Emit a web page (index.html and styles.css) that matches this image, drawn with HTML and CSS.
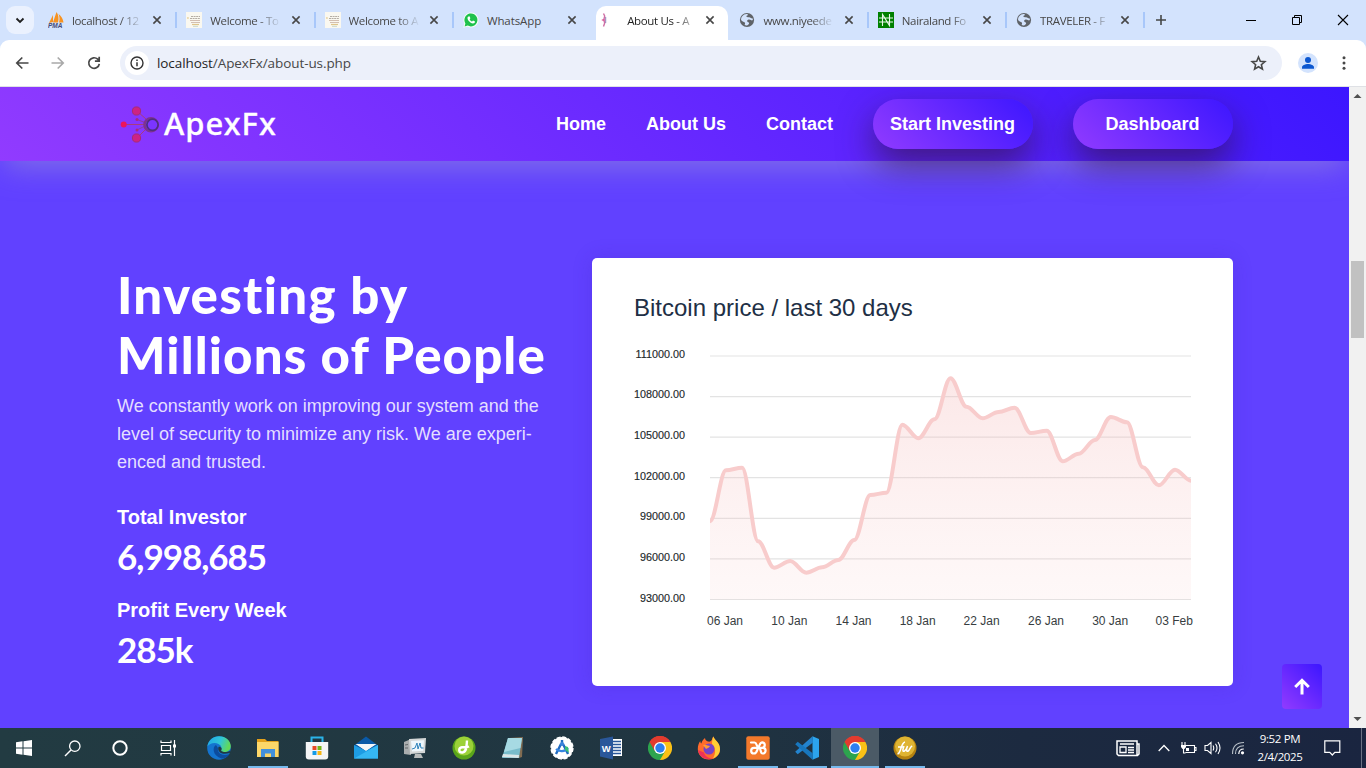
FILE: index.html
```html
<!DOCTYPE html>
<html lang="en">
<head>
<meta charset="utf-8">
<title>About Us - ApexFx</title>
<link rel="stylesheet" href="styles.css">
</head>
<body>
<svg class="defs" width="0" height="0">
  <defs>
    <symbol id="close" viewBox="0 0 10 10"><path d="M1.400 1.400l7.200 7.200M8.600 1.400L1.400 8.600" fill="none" stroke="currentColor" stroke-width="1.600"/></symbol>
    <symbol id="globe" viewBox="0 0 16 16"><circle cx="8" cy="8" r="7.100" fill="#5f6368"/><path d="M3 4.600c1.300-2 3-2.700 4.500-2.700 1 0 1.600.3 1.300 1.100-.3.700-1.200.5-1.400 1.200-.2.800 1.200.9 2.600 1 1.800.1 2 1.200 3.300 1.200.6 0 .8.500.5 1.400-.3 1-1.300.8-1.900.3-.9-.7-1.900-.8-2.900-.3-1 .6-1.200 1.500-.3 2.100.8.500 1.500.4 1.400 1.400-.1 1-1 1.700-2 2.200-.9.100-2-.1-2.500-.4.400-.9.700-1.700.2-2.500C5 9.400 2.500 9.300 2.100 7.900 2 6.800 2.400 5.500 3 4.600z" fill="#d3e3fd"/></symbol>
    <symbol id="page-icon" viewBox="0 0 16 16"><rect width="16" height="16" fill="#faf8f0"/><path d="M1.500 5l1.500 1-1.500 1z" fill="#d8b260"/><path d="M5 4.500h9M4 6.500h10" stroke="#aaa49b" stroke-width=".9" stroke-dasharray="2 .6"/><path d="M4 8.500h10M5 10.500h9" stroke="#ceb8aa" stroke-width=".9"/><path d="M6 12.500h7" stroke="#dfc58c" stroke-width="1.200"/><path d="M7 14.300h5" stroke="#c9d8ca"/></symbol>
    <symbol id="chrome" viewBox="0 0 24 24"><path d="M12 12L1.600 6A12 12 0 0 1 22.400 6z" fill="#ea4335"/><path d="M12 12L22.400 6A12 12 0 0 1 12 24z" fill="#fbc116"/><path d="M12 12L12 24A12 12 0 0 1 1.600 6z" fill="#2da44e"/><path d="M12 6h10.400L17.200 15z" fill="#fbc116"/><path d="M6.800 15L1.600 6A12 12 0 0 1 22.400 6H12z" fill="#e33b2e"/><path d="M17.200 15L12 24 6.800 15z" fill="#2da44e"/><circle cx="12" cy="12" r="6" fill="#fff"/><circle cx="12" cy="12" r="4.700" fill="#2d7ff0"/></symbol>
  </defs>
</svg>

<div class="tabstrip">
  <div class="tab-search"><svg width="10" height="7" viewBox="0 0 10 7"><path d="M1.500 1.500L5 5l3.500-3.500" fill="none" stroke="#1f1f1f" stroke-width="1.800"/></svg></div>
  <div class="tabs">
    <div class="tab"><svg class="fav" viewBox="0 0 16 16"><path d="M1 11L5 3v7zM5 10.500L8.500 0c2 3 2.500 6 1.500 10.500zM11 10.500c1-3 .5-6-.5-8.500 3 2 4.500 5 5 8.500z" fill="#f79321"/><text x="0" y="15.500" class="pma">PMA</text></svg><span class="tab-title">localhost / 12</span><svg class="x"><use href="#close"/></svg></div>
    <div class="tab"><svg class="fav"><use href="#page-icon"/></svg><span class="tab-title">Welcome - To</span><svg class="x"><use href="#close"/></svg></div>
    <div class="tab"><svg class="fav"><use href="#page-icon"/></svg><span class="tab-title">Welcome to A</span><svg class="x"><use href="#close"/></svg></div>
    <div class="tab no-line"><svg class="fav" viewBox="0 0 16 16"><path d="M.3 15.700L1.400 11.600A7.500 7.500 0 1 1 4.400 14.600z" fill="#f5fff7"/><path d="M1.600 14.400L2.400 11.400A6.500 6.500 0 1 1 4.700 13.600z" fill="#1fc14c"/><path d="M5.500 4.500l1-.2.900 2-.8 1c.6 1.100 1.300 1.800 2.500 2.300l.9-1 2 .9c.1 1.200-.9 2-2 2C7.500 11.300 4.600 8.500 4.500 6c0-.7.500-1.300 1-1.500z" fill="#fff"/></svg><span class="tab-title whole">WhatsApp</span><svg class="x"><use href="#close"/></svg></div>
    <div class="tab active no-line"><svg class="fav" viewBox="0 0 16 16"><path d="M2.500 1.500l1.200 2.500-.9 4 .9 3-1.200 3.500" fill="none" stroke="#cf6fa5" stroke-width="1.400"/><path d="M.8 8h3" stroke="#d94f91" stroke-width="1.200"/><path d="M4.700 5v6" stroke="#927fb8" stroke-width="1"/></svg><span class="tab-title">About Us - A</span><svg class="x"><use href="#close"/></svg></div>
    <div class="tab"><svg class="fav"><use href="#globe"/></svg><span class="tab-title">www.niyeede</span><svg class="x"><use href="#close"/></svg></div>
    <div class="tab"><svg class="fav" viewBox="0 0 16 16"><rect width="16" height="16" fill="#008000"/><path d="M4.500 14V2.500L11.500 13.500V2M1 6h14M1 10h14" fill="none" stroke="#e9f7e9" stroke-width="1.100"/></svg><span class="tab-title">Nairaland Fo</span><svg class="x"><use href="#close"/></svg></div>
    <div class="tab"><svg class="fav"><use href="#globe"/></svg><span class="tab-title">TRAVELER - F</span><svg class="x"><use href="#close"/></svg></div>
  </div>
  <svg class="plus" width="12" height="12"><path d="M6 1v10M1 6h10" stroke="#454746" stroke-width="1.600"/></svg>
  <div class="winctl">
    <svg width="12" height="12"><path d="M1 6.500h10" stroke="#000"/></svg>
    <svg width="12" height="12"><path d="M1.500 3.500h7v7h-7zM3.500 3.500v-2h7v7h-2" fill="none" stroke="#000"/></svg>
    <svg width="12" height="12"><path d="M1 1l10 10M11 1L1 11" stroke="#000" stroke-width="1.100"/></svg>
  </div>
</div>

<div class="toolbar">
  <svg class="tool" viewBox="0 0 14 14"><path d="M13.500 7H2M7.300 1.500L1.800 7l5.500 5.500" fill="none" stroke="#474747" stroke-width="1.700"/></svg>
  <svg class="tool" viewBox="0 0 14 14"><path d="M.5 7H12M6.700 1.500L12.200 7l-5.500 5.500" fill="none" stroke="#a9a9a9" stroke-width="1.700"/></svg>
  <svg class="tool" viewBox="0 0 14 14"><path d="M12.300 7.800A5.300 5.300 0 1 1 10.700 3.200L12 4.500M12.200.8v4.300H7.900" fill="none" stroke="#474747" stroke-width="1.700"/></svg>
  <div class="omnibox">
    <span class="info"><svg width="14" height="14" viewBox="0 0 14 14"><circle cx="7" cy="7" r="6" fill="none" stroke="#333" stroke-width="1.400"/><path d="M7 6.300v4M7 3.500v1.500" stroke="#333" stroke-width="1.500"/></svg></span>
    <span class="url"><b>localhost</b>/ApexFx/about-us.php</span>
    <svg class="star" viewBox="0 0 16 16"><path d="M8 1.900l1.700 4 4.300.4-3.300 2.800 1 4.200L8 11.100l-3.700 2.200 1-4.200L2 6.300l4.300-.4z" fill="none" stroke="#474747" stroke-width="1.500"/></svg>
  </div>
  <svg class="avatar" viewBox="0 0 20 20"><circle cx="10" cy="10" r="10" fill="#d3e3fd"/><circle cx="10" cy="7" r="3" fill="#0b57d0"/><path d="M4 15.700v-1.500C4 12.300 7.500 11 10 11s6 1.300 6 3.200v1.500z" fill="#0b57d0"/></svg>
  <svg class="dots" viewBox="0 0 4 14"><circle cx="2" cy="1.700" r="1.500"/><circle cx="2" cy="7" r="1.500"/><circle cx="2" cy="12.300" r="1.500"/></svg>
</div>

<div class="viewport">
  <div class="page">
    <header class="header">
      <div class="brand">
        <svg width="40" height="38" viewBox="0 0 40 38"><g fill="none" stroke="#a93b7d" stroke-width="1"><path d="M17 5l10 9M4 18.500h20M17 32l9-9"/><path d="M17 13.500l8 3M17 24l8-4" stroke="#8f3aa0"/></g><circle cx="16.500" cy="5" r="4.100" fill="#ce2384" stroke="#a92d70"/><circle cx="16.500" cy="32" r="4.100" fill="#ce2384" stroke="#a92d70"/><circle cx="3.700" cy="18.500" r="3" fill="#ed145b"/><circle cx="17" cy="13.500" r="1.500" fill="#a82a80"/><circle cx="17" cy="24" r="1.500" fill="#a82a80"/><circle cx="31" cy="18.800" r="6.500" fill="#7b35ff" stroke="#7d338f" stroke-width="2.600"/><circle cx="32.500" cy="18.800" r="5.600" fill="#7b35ff" stroke="#4f2d80" stroke-width="1.700"/></svg>
        <span class="brand-name">ApexFx</span>
      </div>
      <nav class="nav">
        <a>Home</a><a>About Us</a><a>Contact</a>
        <a class="pill">Start Investing</a><a class="pill">Dashboard</a>
      </nav>
    </header>
    <main class="content">
      <section class="intro">
        <h1><span class="h-a">Investing by</span><br><span class="h-b">Millions of People</span></h1>
        <p>We constantly work on improving our system and the<br>level of security to minimize any risk. We are experi-<br>enced and trusted.</p>
        <h4>Total Investor</h4>
        <div class="num">6,998,685</div>
        <h4>Profit Every Week</h4>
        <div class="num">285k</div>
      </section>
      <section class="card">
        <h2>Bitcoin price / last 30 days</h2>
        <svg class="chart" width="641" height="300" viewBox="592 340 641 300">
          <defs><linearGradient id="fade" gradientUnits="userSpaceOnUse" x1="0" y1="378" x2="0" y2="599"><stop offset="0" stop-color="#f3b3b3" stop-opacity=".31"/><stop offset="1" stop-color="#f9caca" stop-opacity=".13"/></linearGradient></defs>
          <g class="grid"><path d="M710 356h481M710 396.600h481M710 437.200h481M710 477.700h481M710 518.300h481M710 558.900h481M710 599.500h481"/></g>
          <path class="area" d="M710 521.300C715.600 521.300 720.400 470.300 726 470.300S736.500 467.700 742.100 467.700 752.500 541.300 758.100 541.300 768.500 567.700 774.100 567.700 784.600 561 790.200 561 800.600 572.700 806.200 572.700 816.600 567.300 822.200 567.300 832.700 560 838.300 560 848.700 540 854.300 540 864.700 495 870.300 495 880.800 492.700 886.400 492.700 896.800 424.700 902.400 424.700 912.800 438.300 918.400 438.300 928.900 419.300 934.500 419.300 944.900 378.200 950.500 378.200 960.900 406.700 966.500 406.700 977 418.300 982.600 418.300 993 412 998.600 412 1009 407.700 1014.600 407.700 1025.100 433 1030.700 433 1041.100 430.700 1046.700 430.700 1057.100 461.300 1062.700 461.300 1073.200 453.700 1078.800 453.700 1089.200 440 1094.800 440 1105.200 417 1110.800 417 1121.300 422.300 1126.900 422.300 1137.300 467.300 1142.900 467.300 1153.300 485.300 1158.900 485.300 1169.400 469.700 1175 469.700 1185.400 480.700 1191 480.700V599.500H710z"/>
          <path class="line" d="M710 521.300C715.600 521.300 720.400 470.300 726 470.300S736.500 467.700 742.100 467.700 752.500 541.300 758.100 541.300 768.500 567.700 774.100 567.700 784.600 561 790.200 561 800.600 572.700 806.200 572.700 816.600 567.300 822.200 567.300 832.700 560 838.300 560 848.700 540 854.300 540 864.700 495 870.300 495 880.800 492.700 886.400 492.700 896.800 424.700 902.400 424.700 912.800 438.300 918.400 438.300 928.900 419.300 934.500 419.300 944.900 378.200 950.500 378.200 960.900 406.700 966.500 406.700 977 418.300 982.600 418.300 993 412 998.600 412 1009 407.700 1014.600 407.700 1025.100 433 1030.700 433 1041.100 430.700 1046.700 430.700 1057.100 461.300 1062.700 461.300 1073.200 453.700 1078.800 453.700 1089.200 440 1094.800 440 1105.200 417 1110.800 417 1121.300 422.300 1126.900 422.300 1137.300 467.300 1142.900 467.300 1153.300 485.300 1158.900 485.300 1169.400 469.700 1175 469.700 1185.400 480.700 1191 480.700"/>
          <g class="ylab"><text x="685" y="358">111000.00</text><text x="685" y="398">108000.00</text><text x="685" y="439">105000.00</text><text x="685" y="480">102000.00</text><text x="685" y="520">99000.00</text><text x="685" y="561">96000.00</text><text x="685" y="602">93000.00</text></g>
          <g class="xlab"><text x="725" y="625">06 Jan</text><text x="789.300" y="625">10 Jan</text><text x="853.500" y="625">14 Jan</text><text x="917.700" y="625">18 Jan</text><text x="981.600" y="625">22 Jan</text><text x="1046" y="625">26 Jan</text><text x="1110.200" y="625">30 Jan</text><text x="1174.300" y="625">03 Feb</text></g>
        </svg>
      </section>
    </main>
    <a class="to-top"><svg width="18" height="18" viewBox="0 0 18 18"><path d="M9 16.500V3M2.200 9L9 2.300 15.800 9" fill="none" stroke="#fff" stroke-width="3"/></svg></a>
  </div>
  <div class="scrollbar">
    <svg width="17" height="17"><path d="M4.500 11l4-4 4 4z" fill="#505050"/></svg>
    <div class="thumb"></div>
    <svg class="down" width="17" height="17"><path d="M4.500 6l4 4 4-4z" fill="#505050"/></svg>
  </div>
</div>

<div class="taskbar">
  <div class="sys"><svg width="16" height="16"><path d="M0 2.300L6.500 1.300V7.500H0zM7.500 1.200L16 0v7.500H7.500zM0 8.500h6.500v6.200L0 13.800zM7.500 8.500H16V16l-8.500-1.200z" fill="#fff"/></svg></div>
  <div class="sys"><svg width="17" height="17"><circle cx="10.800" cy="6.200" r="5.200" fill="none" stroke="#fff" stroke-width="1.300"/><path d="M7 10L1 16" stroke="#fff" stroke-width="1.400"/></svg></div>
  <div class="sys"><svg width="16" height="16"><circle cx="8" cy="8" r="6.700" fill="none" stroke="#fff" stroke-width="2"/></svg></div>
  <div class="sys"><svg width="17" height="16"><path d="M1 .5v2h10v-2M1 15.500v-2h10v2M1.500 5.500h9v5h-9zM14.500 0v16" fill="none" stroke="#fff" stroke-width="1.200"/><path d="M13 4.500h3v3h-3z" fill="#fff"/></svg></div>
  <div class="apps">
    <div class="app"><svg viewBox="0 0 24 24"><defs><linearGradient id="edge" x1="0" y1="0" x2="1" y2=".3"><stop offset="0" stop-color="#1fa5e8"/><stop offset=".6" stop-color="#31c6d6"/><stop offset="1" stop-color="#61d95a"/></linearGradient></defs><circle cx="12" cy="12" r="11.800" fill="#1474cf"/><path d="M.4 10.500C1.200 4 6.300.2 12 .2c7 0 11.800 5 11.800 9.800 0 4-3 6.200-6.500 6.200-2.600 0-4.300-1-3.300-2.400 1-1.300.6-4.300-2.500-5.800C7.500 6 2.500 7.500.4 10.500z" fill="url(#edge)"/><path d="M9 9C5 11 5.500 20 14.500 22.500c3 .2 6.500-2 8-4.500-8 3-12.500-1.500-11.500-6" fill="#0c4c9d"/><path d="M11.500 11c-1.500 5 3.500 8.500 11.200 6l1.300-2.500c-6 3-11 1.100-9.500-.7 1-1.500-1.500-3.800-3-2.800z" fill="#203943"/></svg></div>
    <div class="app running"><svg viewBox="0 0 24 24"><path d="M1 3h8l2 2h11.500v16H1z" fill="#e4a11b"/><path d="M1 6h21.500v15H1z" fill="#fdd769"/><path d="M5 21v-8h14v8h-4v-3.500H9V21z" fill="#4391dc"/></svg></div>
    <div class="app"><svg viewBox="0 0 24 24"><path d="M6.500 7V1.500h11V7" fill="none" stroke="#2bb3e8" stroke-width="2"/><path d="M.8 6h22.400v14.500a3 3 0 0 1-3 3H3.800a3 3 0 0 1-3-3z" fill="#f4f5f6"/><path d="M7.500 10h4v4h-4z" fill="#e94a26"/><path d="M12.500 10h4v4h-4z" fill="#75b518"/><path d="M7.500 15h4v4h-4z" fill="#159be6"/><path d="M12.500 15h4v4h-4z" fill="#f7b614"/></svg></div>
    <div class="app"><svg viewBox="0 0 24 24"><path d="M0 9.500L12 .5l12 9V22H0z" fill="#0a5aa8"/><path d="M2.500 8h19L12 15z" fill="#f3f6f8"/><path d="M0 9l12 5.800L24 9v13.500H0z" fill="#1e9ce3"/><path d="M0 22.500L24 9v13.500z" fill="#35b7f3"/><path d="M1.500 8h21L12 14.800z" fill="#f3f6f8"/></svg></div>
    <div class="app"><svg viewBox="0 0 24 24"><path d="M1 6l7-3v16l-7-1z" fill="#a9adae"/><path d="M2 9l3-.5M2 12h3" stroke="#626768"/><path d="M6 3l17-1-1 15-15 1z" fill="#d4d7d7"/><path d="M8 5l13-.7-.8 10.500L9 15.500z" fill="#eef7fc"/><path d="M9 13l3-1 2-5 1 6 2-6 1 5h2.500" fill="none" stroke="#2f83bb"/><path d="M12 18h6l2 4h-9z" fill="#b8bcbc"/></svg></div>
    <div class="app"><svg viewBox="0 0 24 24"><circle cx="12" cy="12" r="11.500" fill="#5aa51a"/><circle cx="12" cy="10" r="9.500" fill="#9bd138"/><path d="M15 4.500c-.5 5 0 11.500-4.500 12-4 .3-4.500-4.500-.5-5.200 3-.5 5 .2 7-.8" fill="none" stroke="#fff" stroke-width="2.400"/></svg></div>
    <div class="app"><svg viewBox="0 0 24 24"><path d="M8 2l14-1-1 20-3 1z" fill="#816c52"/><path d="M7 2h14l-3 20H1z" fill="#79bccb"/><path d="M7 2h14l-1.500 10L3 16z" fill="#a7dae3"/><path d="M2 18l16 1-.4 3L1 21z" fill="#dce6e8"/></svg></div>
    <div class="app"><svg viewBox="0 0 24 24"><circle cx="12" cy="12" r="10.900" fill="#fff" stroke="#fff" stroke-width="1.500" stroke-dasharray="4 1.700"/><path d="M12 4v5M11 8L6 18M13 8l5 10" fill="none" stroke="#216bc0" stroke-width="2.400"/><path d="M6 13c3 3 9 3 12-1" fill="none" stroke="#3585e0" stroke-width="2.200"/><path d="M15 10l3 1 1 6-4-3z" fill="#37bf79"/><circle cx="12" cy="8" r="2" fill="#3a83dc"/></svg></div>
    <div class="app"><svg viewBox="0 0 24 24"><path d="M12 3h11v17H12z" fill="#fff"/><path d="M14 5.500h8M14 8.500h8M14 11.500h8M14 14.500h8M14 17.500h8" stroke="#2a579a" stroke-width="1.300"/><path d="M1 3l13-2.500v23L1 20.500z" fill="#2a579a"/><text x="2.800" y="15.500" class="word">W</text></svg></div>
    <div class="app"><svg><use href="#chrome"/></svg></div>
    <div class="app"><svg viewBox="0 0 24 24"><path d="M12 23.500C5 23.500.8 18.500.8 13c0-3.500 1-6 2.500-8 0 1 .3 2 1 2.500C5 5 6.500 3 8 2c0 2 1.500 3 3 3.500 2 .5 3.500-.5 4-2 .3-1.500.6-2.500 1.500-3 .5 3.500 6.500 5.500 6.500 13 0 5.500-4.500 10-11 10z" fill="#ff6b2c"/><path d="M16.500.5C17 4 23 6 23 13c0 5-4 8.500-7 9.500 3-5 3-11-1-14.500 0-3 .5-6 1.500-7.500z" fill="#ffce35"/><path d="M1 14c1 7 8 11 15 8.500-4 0-8-2-9-6z" fill="#ef3158"/><circle cx="12" cy="13" r="5.500" fill="#7643c7"/><path d="M6 9c3-1 5 1 7 1-1 2-3 2-4 3z" fill="#ff9c32"/></svg></div>
    <div class="app running"><svg viewBox="0 0 24 24"><rect x=".3" y=".3" width="23.400" height="23.400" rx="2" fill="#f4792b"/><path d="M5 6.500H8.500C11 6.500 10.500 11.800 13 11.800H16.500a2.800 2.800 0 0 0 0-5.500c-3.800 0-2.500 5.500-5 5.500H8a2.800 2.800 0 0 0 0 5.700c4 0 2.500-5.700 5-5.700M13 11.800c2 0 1.200 5.700 3.500 5.700a2.800 2.800 0 0 0 .5-5.600" fill="none" stroke="#fff" stroke-width="2.200" stroke-linecap="round"/></svg></div>
    <div class="app running"><svg viewBox="0 0 24 24"><path d="M17.500.3L24 3v18l-6.500 2.700z" fill="#2ca4ee"/><path d="M17.500.3L.2 15.700l2.500 2.500L18 6.500z" fill="#2384cf"/><path d="M17.500 23.700L.2 8.300l2.500-2.500L18 17.500z" fill="#1877be"/></svg></div>
    <div class="app running current"><svg><use href="#chrome"/></svg></div>
    <div class="app running"><svg viewBox="0 0 24 24"><circle cx="12" cy="12" r="11.500" fill="#b58210"/><circle cx="12" cy="10.500" r="10" fill="#dfb432"/><path d="M4.500 18c4-1 3-11 7.500-12M5 11h5M11 10c-1.500 4-1.500 6 .5 5s2.500-4 3-5c-1.500 4-1 6 .7 5s1.500-4 4-5" fill="none" stroke="#fff" stroke-width="1.500"/></svg></div>
  </div>
  <div class="tray">
    <svg width="24" height="17" viewBox="0 0 24 17"><path d="M1 1h20v14.500H2.500L1 14zM21 4h2v10l-1.500 1.500H19" fill="none" stroke="#fff" stroke-width="1.500"/><path d="M4 7h6v5.500H4zM4 4h14M12 7.500h6M12 10h6M12 12.500h6" fill="none" stroke="#fff" stroke-width="1.300"/></svg>
    <svg class="chev" width="12" height="8"><path d="M.7 7L6 1.500 11.300 7" fill="none" stroke="#fff" stroke-width="1.300"/></svg>
    <svg class="bat" width="17" height="13"><path d="M5.500 3.500h9v7h-9M14.500 5.500h1.500v3h-1.500M3.500 7v4h2M2 0v3M5 0v3" fill="none" stroke="#fff" stroke-width="1.100"/><path d="M1 3h5v2L4.500 7h-2L1 5zM6 6h3v3H6z" fill="#fff"/></svg>
    <svg class="vol" width="17" height="14"><path d="M1 4.500h2.500L7 1.500v11L3.500 9.500H1zM9 4.500q1.500 2.500 0 5M11.500 2.800q3 4.200 0 8.400M14 1q4 6 0 12" fill="none" stroke="#fff" stroke-width="1.100"/></svg>
    <svg class="wifi" width="14" height="14"><circle cx="11.500" cy="11.800" r="1.600" fill="#fff"/><path d="M7.800 13q0-5 5-5" fill="none" stroke="#fff" stroke-width="1.200"/><path d="M4.500 13Q4.500 4.800 13 4.800M1.500 13Q1.500 1.500 13 1.500" fill="none" stroke="#b8c0c8" stroke-width="1.100"/></svg>
    <div class="clock">9:52 PM<br>2/4/2025</div>
    <svg class="note" width="17" height="16"><path d="M.8.800h15v11.500h-5L8.300 15l-2.500-2.700h-5z" fill="none" stroke="#fff" stroke-width="1.200"/></svg>
    <i class="peek"></i>
  </div>
</div>
</body>
</html>
```
FILE: styles.css
```css
* { box-sizing: border-box; }
body { margin: 0; width: 1366px; height: 768px; overflow: hidden; display: flex; flex-direction: column; font-family: "Liberation Sans", Arial, sans-serif; background: #d3e3fd; }
svg { display: block; flex: none; }
.defs { position: absolute; }

.tabstrip { height: 40px; flex: none; display: flex; align-items: center; background: #d3e3fd; font-family: "Open Sans", sans-serif; }
.tab-search { width: 28px; height: 28px; margin-left: 6px; border-radius: 9px; background: #eaf1fe; display: flex; align-items: center; justify-content: center; }
.tabs { display: grid; grid-template-columns: repeat(8, 138.300px); margin-left: 5px; height: 34px; align-self: flex-end; }
.tab { position: relative; display: flex; align-items: center; padding: 0 15px 6px 9px; color: #474747; }
.tab::after { content: ""; position: absolute; right: 0; top: 6px; width: 2px; height: 16px; background: #a8c7fa; }
.tab.no-line::after { display: none; }
.fav { width: 16px; height: 16px; }
.tab-title { flex: 1; min-width: 0; margin: 0 8px; white-space: nowrap; font-size: 11.500px; letter-spacing: -.35px; -webkit-mask-image: linear-gradient(90deg, #000 48px, transparent 71px); mask-image: linear-gradient(90deg, #000 48px, transparent 71px); }
.tab-title.whole { -webkit-mask-image: none; mask-image: none; letter-spacing: -.1px; }
.x { width: 10px; height: 10px; color: #474747; }
.pma { font: italic bold 6.500px "Liberation Sans", sans-serif; fill: #444b78; }
.active { color: #1f1f1f; }
.active::before { content: ""; position: absolute; left: 4px; right: 2px; top: 0; bottom: 0; background: #fff; border-radius: 10px 10px 0 0; }
.active > * { position: relative; }
.active .tab-title { margin-left: 10px; margin-right: 6px; }
.plus { margin-left: 10px; }
.winctl { margin-left: auto; display: flex; gap: 34px; padding-right: 17px; }

.toolbar { height: 47px; flex: none; display: flex; align-items: center; background: #fff; border-bottom: 1px solid #dfe1e5; border-radius: 9px 9px 0 0; padding-left: 15px; }
.tool { width: 14px; height: 14px; margin-right: 22px; }
.omnibox { width: 1162px; height: 34px; margin-left: -3px; border-radius: 17px; background: #ecf0fa; display: flex; align-items: center; padding: 0 15px 0 5px; }
.info { width: 24px; height: 24px; border-radius: 50%; background: #fff; display: flex; align-items: center; justify-content: center; }
.url { flex: 1; margin-left: 8px; font: 13.500px "Open Sans", sans-serif; letter-spacing: -.08px; color: #474747; }
.url b { font-weight: 400; color: #1f1f1f; }
.star { width: 17px; height: 17px; }
.avatar { width: 20px; height: 20px; margin-left: 16px; }
.dots { width: 4px; height: 14px; margin-left: 24px; fill: #474747; }

.viewport { height: 641px; flex: none; display: flex; }
.page { position: relative; width: 1349px; background: #6141ff; overflow: hidden; }
.header { height: 74px; padding: 0 116px 0 117px; display: flex; align-items: center; justify-content: space-between; background: linear-gradient(45deg, #913bff 0%, #3c16ff 100%); box-shadow: 0 10px 30px -5px rgba(155, 145, 215, .6); }
.brand { display: flex; align-items: center; padding: 2px 0 0 3px; }
.brand-name { margin-left: 4px; margin-top: -5px; font: 500 31px/40px "Noto Sans", sans-serif; letter-spacing: 1px; color: #fff; -webkit-text-stroke: .3px #fff; }
.nav { display: flex; align-items: center; gap: 40px; color: #fff; font-weight: 700; font-size: 18px; }
.pill { width: 160px; height: 50px; border-radius: 25px; line-height: 50px; text-align: center; text-indent: -1px; background: linear-gradient(45deg, #913bff 0%, #3c16ff 100%); box-shadow: 0 15px 35px rgba(50, 20, 60, .65); }
.content { display: flex; padding: 97px 116px 0 117px; justify-content: space-between; }
.intro { padding-top: 7px; color: #fff; }
h1 { margin: 0; font: 900 51px/60px Lato, sans-serif; white-space: nowrap; }
.h-a { letter-spacing: 1.300px; }
.h-b { letter-spacing: 1.100px; }
.intro p { margin: 7px 0 0; font-size: 18px; line-height: 28px; color: #e4dfff; white-space: nowrap; }
h4 { margin: 29px 0 0; font-size: 20px; line-height: 24px; }
.num { font: 700 35px/40px Lato, sans-serif; letter-spacing: -1.050px; margin-top: 7px; }
.num + h4 { margin-top: 22px; }
.card { width: 641px; height: 428px; border-radius: 5px; background: #fff; box-shadow: 0 0 20px rgba(60, 30, 180, .2); }
.card h2 { margin: 36px 0 0 42px; font-size: 24px; font-weight: 400; line-height: 28px; color: #212f45; }
.chart { margin-top: 18px; }
.grid path { stroke: #e3e3e3; stroke-width: 1.200; fill: none; }
.area { fill: url(#fade); }
.line { fill: none; stroke: #f8cccc; stroke-width: 4; }
.ylab text { font-size: 10.800px; text-anchor: end; fill: #22282a; stroke: #22282a; stroke-width: .15px; }
.xlab text { font-size: 12px; text-anchor: middle; fill: #373d3f; }
.to-top { position: absolute; right: 27px; bottom: 19px; width: 40px; height: 45px; border-radius: 4px; background: linear-gradient(45deg, #913bff, #3c16ff); display: flex; align-items: center; justify-content: center; }
.scrollbar { width: 17px; background: #f1f1f1; display: flex; flex-direction: column; }
.thumb { height: 77px; margin: 157px 2px 0; background: #c1c1c1; }
.down { margin-top: auto; }

.taskbar { height: 40px; flex: none; display: flex; color: #fff; background: linear-gradient(90deg, #223b42 0%, #203541 50%, #1c2a40 75%, #1a2540 100%); }
.sys { width: 48px; display: flex; align-items: center; justify-content: center; }
.apps { display: flex; margin-left: 2px; }
.app { width: 49px; height: 40px; display: flex; align-items: center; justify-content: center; }
.app svg { width: 24px; height: 24px; }
.running { background: linear-gradient(#76b9ed, #76b9ed) center bottom / 40px 2px no-repeat; }
.current { width: 48px; margin-right: 1px; background: linear-gradient(#76b9ed, #76b9ed) center bottom / 100% 2px no-repeat #4b5a66; }
.word { font: bold 9.500px "Liberation Sans", sans-serif; fill: #fff; }
.tray { margin-left: auto; display: flex; align-items: center; }
.chev { margin-left: 18px; }
.bat { margin-left: 10px; }
.vol { margin-left: 7px; }
.wifi { margin-left: 10px; }
.clock { width: 62px; margin-left: 4px; text-align: center; font: 11.500px/18px "Open Sans", sans-serif; letter-spacing: -.35px; }
.note { margin-left: 13px; }
.peek { width: 1px; height: 40px; margin: 0 4px 0 20px; background: #6a7284; }
```
